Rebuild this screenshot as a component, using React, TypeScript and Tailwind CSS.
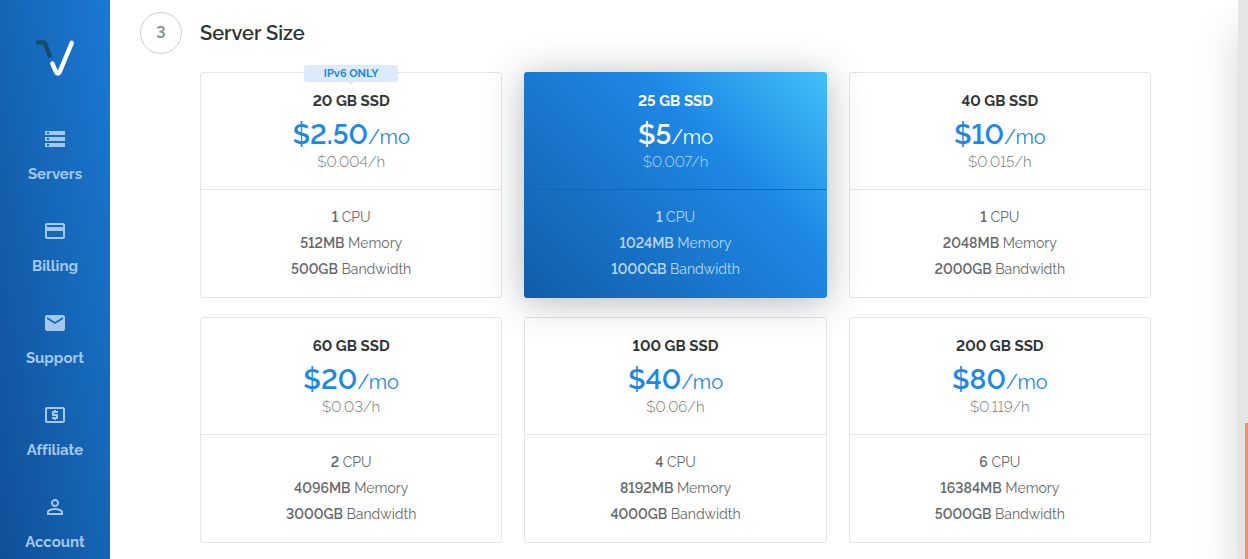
import { useState } from "react";
import type { IconType } from "react-icons";
import { MdEmail, MdLocalAtm, MdPayment, MdPersonOutline, MdStorage } from "react-icons/md";

type Plan = {
  disk: string;
  monthly: string;
  hourly: string;
  cpu: string;
  memory: string;
  bandwidth: string;
  note?: string;
};

const plans: Plan[] = [
  { disk: "20 GB SSD", monthly: "$2.50", hourly: "$0.004/h", cpu: "1", memory: "512MB", bandwidth: "500GB", note: "IPv6 ONLY" },
  { disk: "25 GB SSD", monthly: "$5", hourly: "$0.007/h", cpu: "1", memory: "1024MB", bandwidth: "1000GB" },
  { disk: "40 GB SSD", monthly: "$10", hourly: "$0.015/h", cpu: "1", memory: "2048MB", bandwidth: "2000GB" },
  { disk: "60 GB SSD", monthly: "$20", hourly: "$0.03/h", cpu: "2", memory: "4096MB", bandwidth: "3000GB" },
  { disk: "100 GB SSD", monthly: "$40", hourly: "$0.06/h", cpu: "4", memory: "8192MB", bandwidth: "4000GB" },
  { disk: "200 GB SSD", monthly: "$80", hourly: "$0.119/h", cpu: "6", memory: "16384MB", bandwidth: "5000GB" },
];

const links: { name: string; Icon: IconType }[] = [
  { name: "Servers", Icon: MdStorage },
  { name: "Billing", Icon: MdPayment },
  { name: "Support", Icon: MdEmail },
  { name: "Affiliate", Icon: MdLocalAtm },
  { name: "Account", Icon: MdPersonOutline },
];

function Logo() {
  return (
    <svg width="40" height="38" viewBox="0 0 40 38" fill="none" strokeLinecap="round" strokeLinejoin="round" aria-hidden="true">
      <path d="M3 3.5h5.4c.8 0 1.3.4 1.6 1.1L15.2 18.2" stroke="#144e6b" strokeWidth="4.4" strokeLinecap="butt" />
      <circle cx="3" cy="3.5" r="2.2" fill="#144e6b" />
      <path d="M17.3 24.5L21.2 33.300c.7 1.5 2.6 1.5 3.3 0L36.8 3.8" stroke="#fff" strokeWidth="4.4" />
    </svg>
  );
}

function Sidebar() {
  return (
    <nav className="flex w-[110px] shrink-0 flex-col items-center bg-[linear-gradient(to_top_right,#104f97,#1565b5_50%,#1b79d4)] pt-[39px]">
      <a href="#home" aria-label="Home">
        <Logo />
      </a>
      <ul className="mt-[50px] flex w-full flex-col gap-8">
        {links.map(({ name, Icon }) => (
          <li key={name}>
            <a href={`#${name.toLowerCase()}`} className="flex h-[60px] flex-col items-center justify-between text-[15px] leading-[26px] font-bold text-[#a3c8ee]">
              <Icon size={24} aria-hidden="true" />
              {name}
            </a>
          </li>
        ))}
      </ul>
    </nav>
  );
}

function PlanCard({ plan, selected, onSelect }: { plan: Plan; selected: boolean; onSelect: () => void }) {
  return (
    <label
      className={`relative block cursor-pointer rounded-[3px] border text-center ${
        selected
          ? "z-10 border-transparent bg-[linear-gradient(45deg,#125ca9,#1e88e5_65%,#42c0fa)] bg-origin-border shadow-[0_4px_36px_rgba(38,50,56,0.35)]"
          : "border-[#e4e6e8] bg-white"
      }`}
    >
      <input type="radio" name="server-size" className="sr-only" checked={selected} onChange={onSelect} />
      {plan.note && (
        <span className="absolute -top-2 left-1/2 w-[94px] -translate-x-1/2 rounded-[3px] bg-[#dcebfc] text-[11px] leading-[17px] font-bold text-[#1e88e5]">
          {plan.note}
          <span className="absolute top-full left-1/2 -translate-x-1/2 border-x-3 border-t-3 border-x-transparent border-t-[#dcebfc]" />
        </span>
      )}
      <span className={`block border-b py-[17px] ${selected ? "border-[#1565b5]" : "border-[#e4e6e8]"}`}>
        <span className={`block text-[15px] leading-[22px] font-bold ${selected ? "text-white" : "text-[#2f3437]"}`}>{plan.disk}</span>
        <span className={`block text-xl leading-[46px] ${selected ? "text-white" : "text-[#1e88e5]"}`}>
          <span className="text-[28px] font-semibold">{plan.monthly}</span>/mo
        </span>
        <span className={`-mt-2 block text-[15px] leading-5 font-light ${selected ? "text-[#b4d5f5]" : "text-[#74787b]"}`}>{plan.hourly}</span>
      </span>
      <span className={`block pt-[14px] pb-[15px] text-sm leading-[26px] ${selected ? "text-[#b9d7f4]" : "text-[#66696c]"}`}>
        <span className="block">
          <b className="font-semibold">{plan.cpu}</b> CPU
        </span>
        <span className="block">
          <b className="font-semibold">{plan.memory}</b> Memory
        </span>
        <span className="block">
          <b className="font-semibold">{plan.bandwidth}</b> Bandwidth
        </span>
      </span>
    </label>
  );
}

export default function App() {
  const [selected, setSelected] = useState(1);
  return (
    <div className="flex min-h-screen overflow-hidden bg-white font-['Raleway',Lato,sans-serif] [font-feature-settings:'lnum','liga'_0]">
      <Sidebar />
      <main className="min-w-0 flex-1 pt-3 pr-[87px] pb-4 pl-[30px]">
        <header className="flex items-center gap-[18px]">
          <span className="flex size-[42px] items-center justify-center rounded-full border border-[#ccd2d8] text-base font-semibold text-[#84898e]">3</span>
          <h2 className="text-xl font-semibold text-[#2f3437]">Server Size</h2>
        </header>
        <div role="radiogroup" aria-label="Server Size" className="mt-[18px] ml-[60px] grid grid-cols-3 gap-x-[22px] gap-y-[19px]">
          {plans.map((plan, i) => (
            <PlanCard key={plan.disk} plan={plan} selected={i === selected} onSelect={() => setSelected(i)} />
          ))}
        </div>
      </main>
      <aside className="relative -mr-[200px] w-[210px] shrink-0 bg-[#e5e5e5] shadow-[0_30px_40px_rgba(38,50,56,0.2)]">
        <div className="absolute bottom-0 left-[7px] h-[136px] w-[3px] bg-[#f28e68]" />
      </aside>
    </div>
  );
}
